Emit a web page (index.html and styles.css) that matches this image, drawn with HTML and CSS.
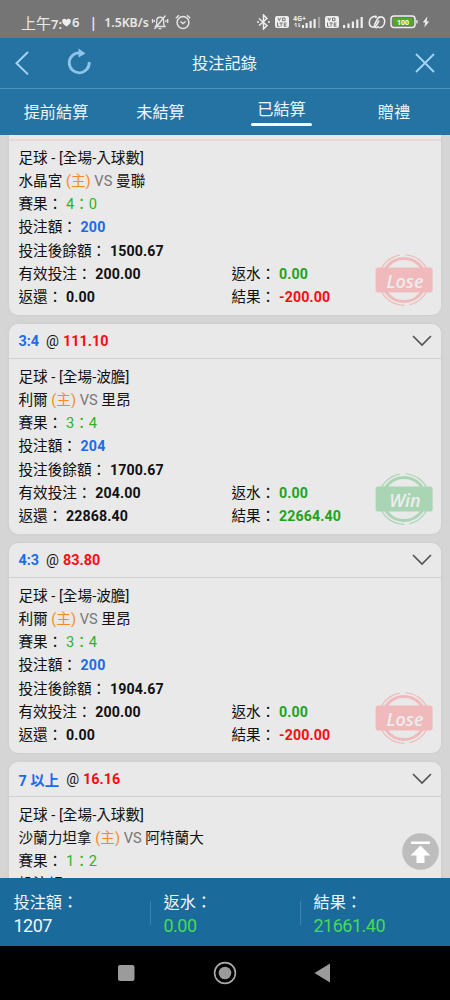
FILE: index.html
```
<!DOCTYPE html>
<html lang="zh-Hant">
<head>
<meta charset="utf-8">
<title>投注記錄</title>
<link rel="stylesheet" href="styles.css">
</head>
<body>
<svg class="defs" width="0" height="0">
  <symbol id="stamp" viewBox="0 0 58 54">
    <g fill="none" stroke="currentColor">
      <circle cx="29" cy="27" r="21.500" stroke-width="3"/>
      <circle cx="29" cy="27" r="25.300" stroke-width="1.200" stroke-dasharray="34 5 30 3 42 6 36 3"/>
    </g>
    <rect x=".6" y="14.500" width="57" height="25" rx="2.500" fill="currentColor"/>
  </symbol>
  <symbol id="chevron" viewBox="0 0 20 12"><path d="M1 1l9 9 9-9" fill="none" stroke="#555" stroke-width="1.700"/></symbol>
  <symbol id="volte" viewBox="0 0 14 12">
    <rect width="14" height="12" rx="2" fill="#eee"/>
    <g fill="none" stroke="#777" stroke-width="1"><path d="M3 1.700l1.300 3 1.300-3M7.500 2h2.500v2.700H7.500zM2.500 6.500v3.800h2M4.500 7h3.200M6.100 7v3.500M11.500 7H9.200v3.300h2.300M9.200 8.700h2"/></g>
  </symbol>
</svg>
<div class="screen">
  <div class="status">
    <span class="clock">上午<b>7:</b></span>
    <svg class="heart" width="9" height="9" viewBox="0 0 9 9"><path d="M4.500 8.500C2 7 .2 5.200.2 3.200.2.500 3.200.200 4.500 2 5.800.200 8.800.500 8.800 3.200c0 2-1.800 3.800-4.300 5.300z" fill="#eee"/></svg>
    <span class="clock"><b>6</b></span>
    <span class="bar">|</span>
    <span class="speed">1.5KB/s</span>
    <svg class="mute" width="18" height="17" viewBox="0 0 18 17" fill="none" stroke="#e4e4e4" stroke-width="1.300"><path d="M4.500 12.500h9.500l-1.300-2V7c0-5-7-5-7 0v3.500zM7.500 14.700h3M14.500 1.500l-11 13.500M1.500 5v4M3.300 6v2M16.700 5v4M15 6v2"/></svg>
    <svg class="alarm" width="16" height="16" viewBox="0 0 16 16" fill="none" stroke="#e4e4e4" stroke-width="1.500"><circle cx="8" cy="8.500" r="5.900"/><path d="M5.500 7.500L8 9.500l2.700-2M.8 4.200l3.200-3M15.200 4.200l-3.200-3"/></svg>
    <div class="signals">
      <svg width="15" height="16" viewBox="0 0 15 16" fill="none" stroke="#eee" stroke-width="1.500"><path d="M3 4.500l8 7L7.500 15V1L11 4.500l-8 7"/><path d="M1 8h2M12 8h2"/></svg>
      <svg width="14" height="12"><use href="#volte"/></svg>
      <svg class="cell4g" width="29" height="16" viewBox="0 0 29 16"><text x="0" y="6.500" class="gen">4G+</text><path d="M3 9v4M1.500 10.500L3 9M6 13V9M7.300 11.500L6 13" fill="none" stroke="#eee"/><g fill="#eee"><rect x="9" y="11" width="2" height="3"/><rect x="12.500" y="9" width="2.200" height="5"/><rect x="16.500" y="7" width="2.200" height="7"/><rect x="20.500" y="5" width="2.200" height="9"/><rect x="25" y="3" width="2.200" height="11" fill="#a2a2a2"/></g></svg>
      <svg width="14" height="12"><use href="#volte"/></svg>
      <svg width="21" height="14" viewBox="0 0 21 14" fill="#eee"><rect x="0" y="10" width="2.200" height="3"/><rect x="4.400" y="8.500" width="2.200" height="4.500"/><rect x="8.800" y="6.500" width="2.200" height="6.500"/><rect x="13.200" y="4.500" width="2.200" height="8.500"/><rect x="17.600" y="2" width="2.200" height="11"/></svg>
      <svg width="18" height="14" viewBox="0 0 18 14" fill="none" stroke="#eee" stroke-width="1.600"><path d="M11 11.500L9 12.500C6.500 13 6 10.500 7 8.500L9.500 3.800C11 1 16.700.8 16.700 6.500c0 3.500-2.500 6-5.500 6.300M7 2.500L9 1.500"/><path d="M8.500 1.500C4.500.8 1.300 3.500 1.300 7.500c0 5.700 5.700 5.500 7.200 2.700L11 5.500"/></svg>
      <svg width="28" height="14" viewBox="0 0 28 14"><rect x="1" y="1" width="24" height="11.500" rx="3" fill="none" stroke="#eee" stroke-width="1.500"/><rect x="3" y="3" width="20" height="7.500" rx="1" fill="#4faa24"/><rect x="26.300" y="5" width="1.300" height="3.500" fill="#eee"/><text x="13" y="9.500" text-anchor="middle" class="charge">100</text></svg>
      <svg width="8" height="12" viewBox="0 0 8 12"><path d="M5.300.5L.8 6.500h2.500L2.300 11.500 7.200 5.500H4.700z" fill="#eee"/></svg>
    </div>
  </div>
  <header class="head">
    <svg class="back" width="16" height="26" viewBox="0 0 16 26"><path d="M14 2L2.500 13.200 14 24.400" fill="none" stroke="#a5d5f5" stroke-width="2"/></svg>
    <svg class="reload" width="24" height="27" viewBox="0 0 24 27"><path d="M12.500 4.800A10 10 0 1 0 22.200 14" fill="none" stroke="#8fc4ea" stroke-width="2.800"/><path d="M11.500.5l7 5-7 4z" fill="#8fc4ea"/></svg>
    <h1>投注記錄</h1>
    <svg class="close" width="20" height="20" viewBox="0 0 20 20"><path d="M1 1l18 18M19 1L1 19" stroke="#a5d5f5" stroke-width="1.800"/></svg>
  </header>
  <nav class="tabs">
    <span>提前結算</span><span>未結算</span><span class="on">已結算</span><span>贈禮</span>
  </nav>
  <main class="list">
    <article class="card first">
      <div class="top"></div>
      <div class="body">
        <p>足球 - [全場-入球數]</p>
        <p>水晶宮 <i>(主)</i> <s>VS</s> 曼聯</p>
        <p>賽果： <em>4：0</em></p>
        <p>投注額： <b class="blue">200</b></p>
        <p>投注後餘額： <b>1500.67</b></p>
        <div class="pair"><p>有效投注： <b>200.00</b></p><p>返水： <b class="green">0.00</b></p></div>
        <div class="pair"><p>返還： <b>0.00</b></p><p>結果： <b class="red">-200.00</b></p></div>
      </div>
      <div class="stamp lose"><svg width="58" height="54"><use href="#stamp"/></svg><span>Lose</span></div>
    </article>
    <article class="card">
      <div class="top"><b class="blue">3:4</b><span>@</span><b class="red">111.10</b><svg width="20" height="12"><use href="#chevron"/></svg></div>
      <div class="body">
        <p>足球 - [全場-波膽]</p>
        <p>利爾 <i>(主)</i> <s>VS</s> 里昂</p>
        <p>賽果： <em>3：4</em></p>
        <p>投注額： <b class="blue">204</b></p>
        <p>投注後餘額： <b>1700.67</b></p>
        <div class="pair"><p>有效投注： <b>204.00</b></p><p>返水： <b class="green">0.00</b></p></div>
        <div class="pair"><p>返還： <b>22868.40</b></p><p>結果： <b class="green">22664.40</b></p></div>
      </div>
      <div class="stamp win"><svg width="58" height="54"><use href="#stamp"/></svg><span>Win</span></div>
    </article>
    <article class="card">
      <div class="top"><b class="blue">4:3</b><span>@</span><b class="red">83.80</b><svg width="20" height="12"><use href="#chevron"/></svg></div>
      <div class="body">
        <p>足球 - [全場-波膽]</p>
        <p>利爾 <i>(主)</i> <s>VS</s> 里昂</p>
        <p>賽果： <em>3：4</em></p>
        <p>投注額： <b class="blue">200</b></p>
        <p>投注後餘額： <b>1904.67</b></p>
        <div class="pair"><p>有效投注： <b>200.00</b></p><p>返水： <b class="green">0.00</b></p></div>
        <div class="pair"><p>返還： <b>0.00</b></p><p>結果： <b class="red">-200.00</b></p></div>
      </div>
      <div class="stamp lose"><svg width="58" height="54"><use href="#stamp"/></svg><span>Lose</span></div>
    </article>
    <article class="card">
      <div class="top"><b class="blue">7 以上</b><span>@</span><b class="red">16.16</b><svg width="20" height="12"><use href="#chevron"/></svg></div>
      <div class="body">
        <p>足球 - [全場-入球數]</p>
        <p>沙蘭力坦拿 <i>(主)</i> <s>VS</s> 阿特蘭大</p>
        <p>賽果： <em>1：2</em></p>
        <p>投注額：</p>
      </div>
    </article>
    <svg class="totop" width="37" height="37" viewBox="0 0 37 37"><circle cx="18.500" cy="18.500" r="18.300" fill="#bdbdbd"/><path d="M9 8.500h19v2.500H9zM18.500 12.500L28.500 22.500h-6V30h-8v-7.500h-6z" fill="#fff"/></svg>
  </main>
  <footer class="sum">
    <div><p>投注額：</p><p>1207</p></div>
    <div><p>返水：</p><p class="lime">0.00</p></div>
    <div><p>結果：</p><p class="lime">21661.40</p></div>
  </footer>
  <div class="keys">
    <svg width="18" height="18"><rect x="1" y="1" width="16.500" height="16" rx="2" fill="#9b9b9b"/></svg>
    <svg width="24" height="24"><circle cx="12" cy="12" r="10.400" fill="none" stroke="#aaa" stroke-width="1.600"/><circle cx="12" cy="12" r="6.300" fill="#9b9b9b"/></svg>
    <svg width="17" height="20"><path d="M.5 10L16 .500v19z" fill="#9b9b9b"/></svg>
  </div>
</div>
</body>
</html>
```
FILE: styles.css
```
* { box-sizing: border-box; }
body, p, h1 { margin: 0; font-weight: 400; }
body { font-family: Roboto, "Noto Sans CJK TC", sans-serif; background: #000; }
svg { display: block; flex: none; }
.defs { position: absolute; }
.screen { width: 450px; height: 1000px; display: flex; flex-direction: column; overflow: hidden; }

.status { height: 38px; flex: none; background: #757575; color: #e8e8e8; display: flex; align-items: center; padding: 6px 20px 0 21px; white-space: nowrap; font-size: 15px; }
.clock b { font: 600 13px "Noto Sans", sans-serif; }
.heart { margin: 0 1px 0 0; }
.bar { margin-left: 10px; font: 600 14px "Noto Sans", sans-serif; }
.speed { margin-left: 7px; font: 600 12.3px "Noto Sans", sans-serif; width: 45px; }
.mute { margin-left: 2px; }
.alarm { margin-left: 6px; }
.signals { margin-left: auto; display: flex; align-items: center; gap: 4px; }
.signals svg:nth-child(4) { margin-left: -1px; }
.gen { font: 700 7px "Noto Sans", sans-serif; fill: #eee; }
.charge { font: 700 7px "Noto Sans", sans-serif; fill: #fff; }

.head { height: 51px; flex: none; background: #2573a2; border-bottom: 1px solid #4c93bd; display: flex; align-items: center; padding: 0 15px 0 14px; color: #eef7fd; }
.reload { margin: 0 0 3px 37px; }
.head h1 { font-size: 16.3px; margin: -2px 0 0 101px; }
.close { margin-left: auto; }

.tabs { height: 46px; flex: none; background: #2573a2; color: #eef7fd; font-size: 16.2px; line-height: 24px; display: grid; grid-template-columns: 112px 97px 145px 80px; padding-top: 12px; text-align: center; }
.tabs .on { justify-self: center; width: 61px; height: 28px; margin-top: -3px; position: relative; }
.tabs .on::after { content: ""; position: absolute; left: 0; bottom: 0; width: 61px; height: 3px; border-radius: 2px; background: #f4faff; }

.list { flex: 1; min-height: 0; overflow: hidden; position: relative; background: #d5d5d5; padding: 0 9px; }
.card { position: relative; height: 210px; margin-bottom: 9px; background: #e9e9e9; border-radius: 9px; box-shadow: 0 0 3px #c8c8c8; color: #111; font-size: 14.65px; }
.first { margin-top: -30px; }
.top { height: 35px; border-bottom: 1px solid #d0d0d0; padding: 0 9px 0 9.5px; display: flex; align-items: center; font-size: 14.4px; }
.top span { margin: 0 4px 0 7px; }
.top svg { margin-left: auto; }
.first .top { height: 36px; border-bottom: 2px solid #ecd7d7; }
.body { padding: 6.6px 0 0 9.4px; }
.first .body { padding-top: 5.6px; }
.body p { height: 23.3px; line-height: 23.3px; white-space: nowrap; }
.body b, .top b { font-weight: 700; }
.body b { font-size: 14.2px; letter-spacing: .13px; }
.pair { display: grid; grid-template-columns: 213px 1fr; }
i { font-style: normal; color: #f68c1f; }
s { text-decoration: none; color: #777; }
em { font-style: normal; color: #2db32d; }
.blue { color: #1a6bea; }
.red { color: #f80c12; }
.green { color: #21a321; }
.stamp { position: absolute; left: 365.5px; top: 147.5px; width: 58px; height: 54px; }
.stamp span { position: absolute; inset: 15px 0 0 3px; text-align: center; font: italic 600 18px/26px "Open Sans", sans-serif; color: #ededed; }
.lose { color: #f0b9bb; }
.win { color: #aad5b5; }
.totop { position: absolute; left: 402px; top: 698px; }

.sum { height: 68px; flex: none; background: #1a6a9b; color: #eef7fd; display: grid; grid-template-columns: 150px 150px 150px; padding-top: 12.5px; font-size: 16.2px; line-height: 23.5px; }
.sum div { position: relative; padding-left: 13.5px; }
.sum div + div::before { content: ""; position: absolute; left: 0; top: 10px; height: 24px; width: 1px; background: #3c83b0; }
.sum p + p { font-size: 18px; letter-spacing: -.5px; }
.sum .lime { color: #43dc55; }
.keys { height: 54px; flex: none; background: #000; display: flex; align-items: center; justify-content: space-between; padding: 0 119px 0 117px; }
```
